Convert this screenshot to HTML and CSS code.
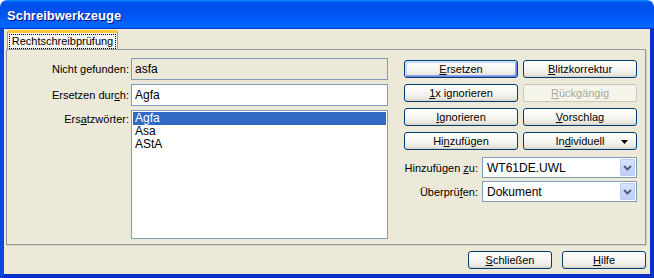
FILE: index.html
```html
<!DOCTYPE html>
<html lang="de">
<head>
    <meta charset="UTF-8">
    <meta name="viewport" content="width=device-width, initial-scale=1.0">
    <title>Schreibwerkzeuge</title>
    <link rel="stylesheet" href="styles.css">
</head>
<body>

<div class="window">
    <div class="titlebar">
        <span class="title">Schreibwerkzeuge</span>
    </div>

    <div class="client">
        <div class="tabs">
            <div class="tab active"><span class="tab-label">Rechtschreibprüfung</span></div>
        </div>

        <div class="panel">
            <!-- Left side: word fields and suggestions -->
            <div class="form">
                <label class="form-label">Nicht gefunden:</label>
                <div class="field readonly">asfa</div>

                <label class="form-label">Ersetzen dur<u>c</u>h:</label>
                <div class="field input">Agfa</div>

                <label class="form-label top">Ers<u>a</u>tzwörter:</label>
                <ul class="listbox">
                    <li class="selected">Agfa</li>
                    <li>Asa</li>
                    <li>AStA</li>
                </ul>
            </div>

            <!-- Right side: actions -->
            <div class="actions">
                <div class="button-grid">
                    <button class="btn default"><u>E</u>rsetzen</button>
                    <button class="btn"><u>B</u>litzkorrektur</button>
                    <button class="btn"><u>1</u>x ignorieren</button>
                    <button class="btn" disabled><u>R</u>ückgängig</button>
                    <button class="btn"><u>I</u>gnorieren</button>
                    <button class="btn"><u>V</u>orschlag</button>
                    <button class="btn">Hi<u>n</u>zufügen</button>
                    <button class="btn menu-btn">
                        <span>In<u>d</u>ividuell</span>
                        <svg class="menu-arrow" width="7" height="4" viewBox="0 0 7 4"><polygon points="0,0 7,0 3.5,4" fill="#000"/></svg>
                    </button>
                </div>

                <div class="combo-grid">
                    <label class="combo-label">Hinzufügen <u>z</u>u:</label>
                    <div class="combo">
                        <span class="combo-text">WT61DE.UWL</span>
                        <span class="combo-btn">
                            <svg width="9" height="6" viewBox="0 0 9 6"><polyline points="1,1 4.5,4.5 8,1" fill="none" stroke="#4D6185" stroke-width="2"/></svg>
                        </span>
                    </div>

                    <label class="combo-label">Überprü<u>f</u>en:</label>
                    <div class="combo">
                        <span class="combo-text">Dokument</span>
                        <span class="combo-btn">
                            <svg width="9" height="6" viewBox="0 0 9 6"><polyline points="1,1 4.5,4.5 8,1" fill="none" stroke="#4D6185" stroke-width="2"/></svg>
                        </span>
                    </div>
                </div>
            </div>
        </div>

        <div class="footer">
            <button class="btn footer-btn"><u>S</u>chließen</button>
            <button class="btn footer-btn"><u>H</u>ilfe</button>
        </div>
    </div>
</div>

</body>
</html>
```

FILE: styles.css
```css
body {
    margin: 0;
    padding: 0;
    background-color: #fff;
    font-family: "Liberation Sans", Arial, sans-serif;
    font-size: 11px;
    color: #000;
}

.window {
    width: 654px;
    height: 278px;
    display: flex;
    flex-direction: column;
}

/* XP Luna title bar */
.titlebar {
    height: 29px;
    flex: none;
    border-radius: 7px 7px 0 0;
    background: linear-gradient(180deg, #0997ff, #0053ee 8%, #0050ee 40%, #0066ff 88%, #0066ff 93%, #005bff 95%, #003dd7 96%, #003dd7);
    display: flex;
    align-items: center;
    padding-left: 7px;
}
.title {
    color: #fff;
    font-weight: bold;
    font-size: 13px;
    text-shadow: 1px 1px #0f1089;
    margin-top: 1px;
}

.client {
    flex: 1;
    display: flex;
    flex-direction: column;
    background-color: #ece9d8;
    border-style: solid;
    border-width: 0 4px 4px 4px;
    border-color: #0a3fd6 #0733c9 #0631c4 #0a48e0;
}

/* Tabs */
.tabs {
    display: flex;
    margin-top: 2px;
    padding-left: 3px;
    height: 18px;
    position: relative;
    z-index: 1;
}
.tab {
    width: 111px;
    height: 17px;
    border: 1px solid #919b9c;
    border-bottom: none;
    border-top: 3px solid #ffc83c;
    border-radius: 3px 3px 0 0;
    background: linear-gradient(180deg, #fcfcfe, #f4f3ee);
    display: flex;
    align-items: center;
    justify-content: center;
    margin-top: -1px;
    box-sizing: border-box;
    height: 19px;
}
.tab-label {
    border: 1px dotted #000;
    padding: 0 2px;
    line-height: 13px;
}

.panel {
    height: 196px;
    box-sizing: border-box;
    margin: 0 4px 0 2px;
    border: 1px solid #919b9c;
    box-shadow: 1px 1px 0 #d0cebf;
    background-color: #ece9d8;
    display: flex;
    padding: 8px 0 0 2px;
}

/* Left form */
.form {
    display: grid;
    grid-template-columns: 120px 257px;
    grid-template-rows: 22px 22px 129px;
    column-gap: 2px;
    row-gap: 4px;
    align-content: start;
}
.form-label {
    text-align: right;
    align-self: center;
}
.form-label.top {
    align-self: start;
    padding-top: 3px;
}
.field {
    border: 1px solid #7f9db9;
    display: flex;
    align-items: center;
    padding-left: 3px;
    font-size: 12px;
}
.field.readonly {
    background-color: #ece9d8;
}
.field.input {
    background-color: #fff;
}
.listbox {
    list-style: none;
    margin: 0;
    padding: 1px;
    border: 1px solid #7f9db9;
    background-color: #fff;
    font-size: 12px;
}
.listbox li {
    height: 13px;
    line-height: 13px;
    padding-left: 2px;
}
.listbox li.selected {
    background-color: #316ac5;
    color: #fff;
}

/* Right side */
.actions {
    margin-left: 16px;
    margin-top: 2px;
    width: 233px;
}
.button-grid {
    display: grid;
    grid-template-columns: 114px 114px;
    grid-auto-rows: 18px;
    column-gap: 5px;
    row-gap: 6px;
}
.btn {
    font-family: "Liberation Sans", Arial, sans-serif;
    font-size: 11px;
    color: #000;
    border: 1px solid #003c74;
    border-radius: 3px;
    background: linear-gradient(180deg, #ffffff 0%, #f5f4ef 55%, #e9e7de 85%, #d6d0c5 100%);
    padding: 0;
    margin: 0;
    height: 18px;
}
.btn.default {
    box-shadow: inset 1px 1px #cee7ff, inset -1px -1px #6982ee, inset 2px 2px #bcd4f6, inset -2px -2px #89ade4;
}
.btn:disabled {
    color: #aca899;
    border-color: #c9c7ba;
    background: #f5f4ea;
}
.menu-btn {
    display: flex;
    align-items: center;
    justify-content: center;
    position: relative;
}
.menu-arrow {
    position: absolute;
    right: 8px;
    top: 7px;
}

.combo-grid {
    display: grid;
    grid-template-columns: 1fr 155px;
    grid-auto-rows: 21px;
    column-gap: 4px;
    row-gap: 3px;
    margin-top: 7px;
}
.combo-label {
    text-align: right;
    align-self: center;
}
.combo {
    border: 1px solid #7f9db9;
    background-color: #fff;
    display: flex;
    align-items: center;
    padding: 1px;
    font-size: 12px;
}
.combo-text {
    flex: 1;
    padding-left: 3px;
}
.combo-btn {
    width: 15px;
    height: 17px;
    box-sizing: border-box;
    border: 1px solid #bccbf4;
    border-radius: 1px;
    background: linear-gradient(180deg, #d8e3fc, #bccdf7);
    display: flex;
    align-items: center;
    justify-content: center;
}

/* Footer buttons */
.footer {
    flex: 1;
    display: flex;
    justify-content: flex-end;
    align-items: flex-start;
    gap: 10px;
    padding: 6px 4px 0 0;
}
.footer-btn {
    width: 84px;
}
```
